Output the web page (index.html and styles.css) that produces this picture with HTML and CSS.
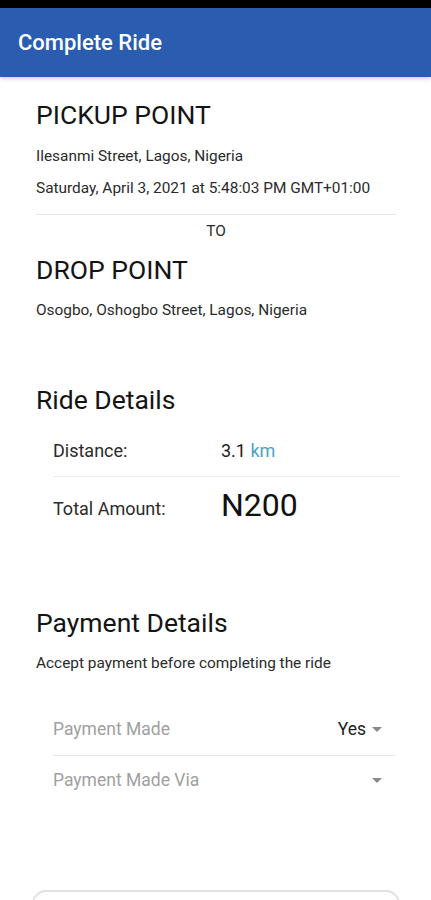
FILE: index.html
```html
<!DOCTYPE html>
<html lang="en">
<head>
  <meta charset="UTF-8">
  <meta name="viewport" content="width=device-width, initial-scale=1.0">
  <title>Complete Ride</title>
  <link rel="stylesheet" href="styles.css">
</head>
<body>
  <div class="status-bar"></div>
  <header class="app-bar">
    <h1>Complete Ride</h1>
  </header>

  <main class="content">
    <!-- Pickup / drop -->
    <section class="route">
      <h2 class="point-title">PICKUP POINT</h2>
      <p class="small address">Ilesanmi Street, Lagos, Nigeria</p>
      <p class="small date">Saturday, April 3, 2021 at 5:48:03 PM GMT+01:00</p>
      <div class="route-divider"></div>
      <p class="small to">TO</p>
      <h2 class="point-title drop">DROP POINT</h2>
      <p class="small address">Osogbo, Oshogbo Street, Lagos, Nigeria</p>
    </section>

    <!-- Ride details -->
    <section class="ride">
      <h2 class="section-title">Ride Details</h2>
      <div class="detail-row">
        <span class="detail-label">Distance:</span>
        <span class="detail-value">3.1 <span class="unit">km</span></span>
      </div>
      <div class="detail-row last">
        <span class="detail-label">Total Amount:</span>
        <span class="detail-value amount">N200</span>
      </div>
    </section>

    <!-- Payment -->
    <section class="payment">
      <h2 class="section-title">Payment Details</h2>
      <p class="small note">Accept payment before completing the ride</p>
      <div class="select-row">
        <span class="select-label">Payment Made</span>
        <span class="select-value">Yes <span class="caret"></span></span>
      </div>
      <div class="select-row last">
        <span class="select-label">Payment Made Via</span>
        <span class="select-value"><span class="caret"></span></span>
      </div>
    </section>

    <div class="bottom-card"></div>
  </main>
</body>
</html>
```

FILE: styles.css
```css
body {
  font-family: Roboto, "Noto Sans", sans-serif;
  margin: 0;
  padding: 0;
  background-color: #ffffff;
  color: #1a1a1a;
  height: 900px;
  overflow: hidden;
}
.status-bar {
  height: 8px;
  background-color: #000000;
}
.app-bar {
  height: 69px;
  background-color: #2a5cb0;
  display: flex;
  align-items: center;
  padding: 0 18px;
  box-shadow: 0 2px 4px rgba(0, 0, 0, 0.18);
}
.app-bar h1 {
  margin: 0;
  color: #ffffff;
  font-size: 22px;
  font-weight: 500;
}
.content {
  padding: 0 35px 0 36px;
}
p {
  margin: 0;
}
.small {
  font-size: 15.4px;
  line-height: 20px;
  color: #2b2b2b;
}
.point-title,
.section-title {
  font-size: 26.5px;
  line-height: 30px;
  font-weight: 400;
  margin: 0;
  color: #141414;
}

/* Pickup / drop */
.route {
  padding-top: 23px;
}
.route .address {
  margin-top: 16px;
}
.route .date {
  margin-top: 12px;
}
.route-divider {
  height: 1px;
  background-color: #e6e6e6;
  margin-top: 16px;
}
.to {
  text-align: center;
  margin-top: 6px;
}
.point-title.drop {
  margin-top: 14px;
}
.route .drop + .address {
  margin-top: 15px;
}

/* Ride details */
.ride {
  margin-top: 65px;
}
.ride .section-title {
  margin-bottom: 9px;
}
.detail-row {
  display: flex;
  align-items: center;
  height: 52px;
  margin: 0 -4px 0 17px;
  border-bottom: 1px solid #ececec;
}
.detail-row.last {
  border-bottom: none;
  height: 62px;
}
.detail-label {
  width: 168px;
  font-size: 18px;
  color: #2b2b2b;
}
.detail-value {
  font-size: 18px;
  color: #222222;
}
.unit {
  color: #4aa3c9;
}
.amount {
  font-size: 32px;
  color: #111111;
  margin-top: -6px;
}

/* Payment */
.payment {
  margin-top: 69px;
}
.payment .note {
  margin-top: 15px;
}
.payment .note + .select-row {
  margin-top: 30px;
}
.select-row {
  display: flex;
  align-items: center;
  justify-content: space-between;
  height: 52px;
  margin-left: 17px;
  border-bottom: 1px solid #e8e8e8;
}
.select-row.last {
  border-bottom: none;
  height: 48px;
}
.select-label {
  font-size: 17.5px;
  color: #a0a0a0;
}
.select-value {
  font-size: 17.5px;
  color: #222222;
  display: flex;
  align-items: center;
  gap: 6px;
  padding-right: 14px;
}
.caret {
  width: 0;
  height: 0;
  border-left: 5px solid transparent;
  border-right: 5px solid transparent;
  border-top: 5px solid #8a8a8a;
}
.bottom-card {
  margin: 86px -4px 0 -4px;
  height: 40px;
  border: 2px solid #e2e2e2;
  border-radius: 14px;
}
```
